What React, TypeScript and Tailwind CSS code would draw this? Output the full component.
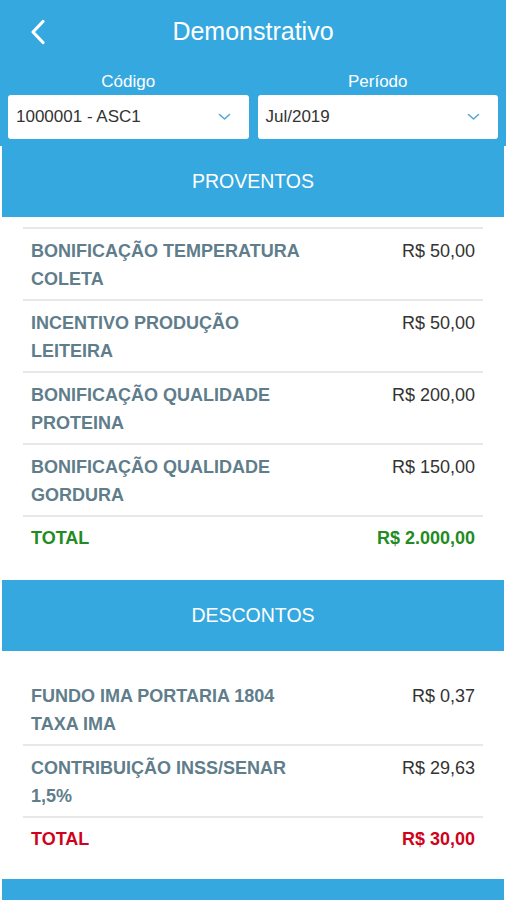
import React from "react";

type Item = { label: string; value: string };

const proventos: Item[] = [
  { label: "BONIFICAÇÃO TEMPERATURA COLETA", value: "R$ 50,00" },
  { label: "INCENTIVO PRODUÇÃO LEITEIRA", value: "R$ 50,00" },
  { label: "BONIFICAÇÃO QUALIDADE PROTEINA", value: "R$ 200,00" },
  { label: "BONIFICAÇÃO QUALIDADE GORDURA", value: "R$ 150,00" },
];

const descontos: Item[] = [
  { label: "FUNDO IMA PORTARIA 1804 TAXA IMA", value: "R$ 0,37" },
  { label: "CONTRIBUIÇÃO INSS/SENAR 1,5%", value: "R$ 29,63" },
];

function Chevron() {
  return (
    <svg width="13" height="8" viewBox="0 0 13 8" fill="none">
      <path d="M1.5 1.5 L6.5 6 L11.5 1.5" stroke="#5aa6d6" strokeWidth="1.6" strokeLinecap="round" strokeLinejoin="round" />
    </svg>
  );
}

function Select({ label, value }: { label: string; value: string }) {
  return (
    <div className="flex flex-col">
      <div className="text-center text-[17px] leading-[22px] text-white">{label}</div>
      <div className="mt-[2px] flex h-[44px] items-center justify-between rounded-[3px] bg-white pl-2 pr-[18px]">
        <span className="text-[17px] text-[#333]">{value}</span>
        <Chevron />
      </div>
    </div>
  );
}

function SectionHeader({ title }: { title: string }) {
  return (
    <div className="mx-[2px] flex h-[71px] items-center justify-center bg-[#35a8e0] text-[19.5px] text-white">
      {title}
    </div>
  );
}

function Row({ item }: { item: Item }) {
  return (
    <div className="flex justify-between border-b-2 border-[#e6e8ea] px-2 pt-2 pb-[6px]">
      <div className="w-[290px] text-[18px] font-bold leading-[28px] text-[#607d8b]">{item.label}</div>
      <div className="text-[18px] leading-[28px] text-[#333]">{item.value}</div>
    </div>
  );
}

function Total({ value, color }: { value: string; color: string }) {
  return (
    <div className={`flex justify-between px-2 pt-[7px] text-[18px] font-bold leading-[28px] ${color}`}>
      <span>TOTAL</span>
      <span>{value}</span>
    </div>
  );
}

export default function App() {
  return (
    <div className="flex h-[900px] flex-col overflow-hidden bg-white" style={{ fontFamily: '"Liberation Sans", Arial, sans-serif' }}>
      {/* Header */}
      <div className="bg-[#35a8e0] px-2 pb-[7px]">
        <div className="grid h-[64px] grid-cols-[60px_1fr_60px] items-center">
          <svg width="16" height="26" viewBox="0 0 16 26" fill="none" className="ml-[22px]">
            <path d="M13 2.5 L3 13 L13 23.5" stroke="white" strokeWidth="3.2" strokeLinecap="round" strokeLinejoin="round" />
          </svg>
          <h1 className="text-center text-[25px] text-white">Demonstrativo</h1>
          <div />
        </div>
        <div className="mt-[7px] grid grid-cols-2 gap-[9px]">
          <Select label="Código" value="1000001 - ASC1" />
          <Select label="Período" value="Jul/2019" />
        </div>
      </div>

      {/* Proventos */}
      <SectionHeader title="PROVENTOS" />
      <div className="mx-[2px] bg-white pt-[10px] pb-[28px]">
        <div className="mx-[21px]">
          <div className="border-b-2 border-[#e6e8ea]" />
          {proventos.map((p) => (
            <Row key={p.label} item={p} />
          ))}
          <Total value="R$ 2.000,00" color="text-[#228b22]" />
        </div>
      </div>

      {/* Descontos */}
      <SectionHeader title="DESCONTOS" />
      <div className="mx-[2px] bg-white pt-[31px] pb-[26px]">
        <div className="mx-[21px]">
          {descontos.map((d, i) => (
            <div key={d.label} className={i === 0 ? "-mt-2" : ""}>
              <Row item={d} />
            </div>
          ))}
          <Total value="R$ 30,00" color="text-[#d0021b]" />
        </div>
      </div>

      <div className="mx-[2px] flex-1 bg-[#35a8e0]" />
    </div>
  );
}
